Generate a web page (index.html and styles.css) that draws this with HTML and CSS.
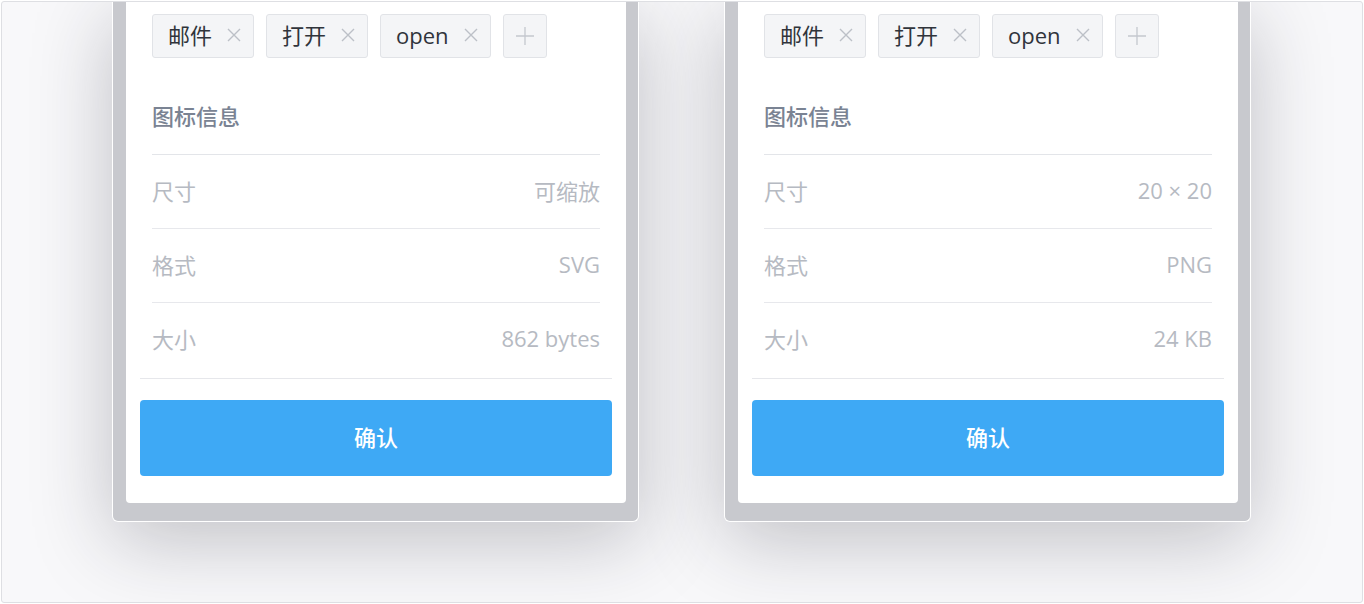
FILE: index.html
```html
<!DOCTYPE html>
<html lang="zh-CN">
<head>
<meta charset="utf-8">
<link rel="stylesheet" href="styles.css">
</head>
<body>
<div class="frame">
  <div class="panels">
    <section class="panel">
      <div class="card">
        <div class="tags">
          <span class="tag">邮件<svg class="close" viewBox="0 0 14 14"><path d="M1 1L13 13M13 1L1 13"/></svg></span>
          <span class="tag">打开<svg class="close" viewBox="0 0 14 14"><path d="M1 1L13 13M13 1L1 13"/></svg></span>
          <span class="tag">open<svg class="close" viewBox="0 0 14 14"><path d="M1 1L13 13M13 1L1 13"/></svg></span>
          <span class="tag add"><svg class="plus" viewBox="0 0 20 20"><path d="M10 1V19M1 10H19"/></svg></span>
        </div>
        <h3 class="heading">图标信息</h3>
        <div class="rows">
          <div class="row"><span>尺寸</span><span>可缩放</span></div>
          <div class="row"><span>格式</span><span>SVG</span></div>
          <div class="row"><span>大小</span><span>862 bytes</span></div>
        </div>
        <div class="footer"><button class="btn">确认</button></div>
      </div>
    </section>
    <section class="panel">
      <div class="card">
        <div class="tags">
          <span class="tag">邮件<svg class="close" viewBox="0 0 14 14"><path d="M1 1L13 13M13 1L1 13"/></svg></span>
          <span class="tag">打开<svg class="close" viewBox="0 0 14 14"><path d="M1 1L13 13M13 1L1 13"/></svg></span>
          <span class="tag">open<svg class="close" viewBox="0 0 14 14"><path d="M1 1L13 13M13 1L1 13"/></svg></span>
          <span class="tag add"><svg class="plus" viewBox="0 0 20 20"><path d="M10 1V19M1 10H19"/></svg></span>
        </div>
        <h3 class="heading">图标信息</h3>
        <div class="rows">
          <div class="row"><span>尺寸</span><span>20 × 20</span></div>
          <div class="row"><span>格式</span><span>PNG</span></div>
          <div class="row"><span>大小</span><span>24 KB</span></div>
        </div>
        <div class="footer"><button class="btn">确认</button></div>
      </div>
    </section>
  </div>
</div>
</body>
</html>
```
FILE: styles.css
```css
* { box-sizing: border-box; }
html, body { margin: 0; padding: 0; background: #ffffff; }
body {
  font-family: "Open Sans", "Noto Sans CJK SC", sans-serif;
}
.frame {
  margin: 1px;
  width: 1362px;
  height: 602px;
  border: 1px solid #dedfe3;
  border-radius: 3px;
  background: #f8f8fa;
  overflow: hidden;
}
.panels {
  display: flex;
  justify-content: center;
  gap: 85px;
  padding-right: 1px;
}
.panel {
  width: 527px;
  background: #c8c9ce;
  border: 1px solid #ffffff;
  border-top: none;
  border-radius: 0 0 6px 6px;
  padding: 0 12px 18px 13px;
  box-shadow: 0 18px 80px rgba(30, 30, 45, 0.26);
}
.card {
  background: #ffffff;
  border-radius: 0 0 4px 4px;
  padding: 12px 14px 27px;
}
.tags {
  display: flex;
  gap: 12px;
  padding: 0 12px;
}
.tag {
  display: flex;
  align-items: center;
  height: 44px;
  padding: 0 12px 2px 15px;
  border: 1px solid #e1e3e7;
  border-radius: 3px;
  background: #f4f5f7;
  color: #30343b;
  font-size: 22px;
  line-height: 1;
}
.close {
  width: 14px;
  height: 14px;
  margin-left: 15px;
  fill: none;
  stroke: #bcc0c7;
  stroke-width: 1.4;
}
.tag.add {
  width: 44px;
  padding: 0;
  justify-content: center;
}
.plus {
  width: 20px;
  height: 20px;
  fill: none;
  stroke: #c4c7ce;
  stroke-width: 1.3;
}
.heading {
  margin: 0 12px;
  padding: 44px 0 24px;
  font-size: 22px;
  line-height: 28px;
  font-weight: 500;
  color: #7a8393;
  border-bottom: 1px solid #e3e5e9;
}
.rows {
  padding: 0 12px 2px;
}
.row {
  display: flex;
  justify-content: space-between;
  align-items: center;
  height: 74px;
  padding-bottom: 3px;
  border-bottom: 1px solid #e7e8ec;
  font-size: 22px;
  color: #b6bac2;
}
.row:last-child {
  border-bottom: none;
  height: 73px;
}
.footer {
  border-top: 1px solid #e6e7eb;
  padding-top: 21px;
}
.btn {
  display: block;
  width: 100%;
  height: 76px;
  border: none;
  border-radius: 4px;
  background: #3ea9f5;
  color: #ffffff;
  font-family: "Noto Sans CJK SC", sans-serif;
  font-size: 22px;
  font-weight: 500;
  padding: 0 0 5px;
}
```
